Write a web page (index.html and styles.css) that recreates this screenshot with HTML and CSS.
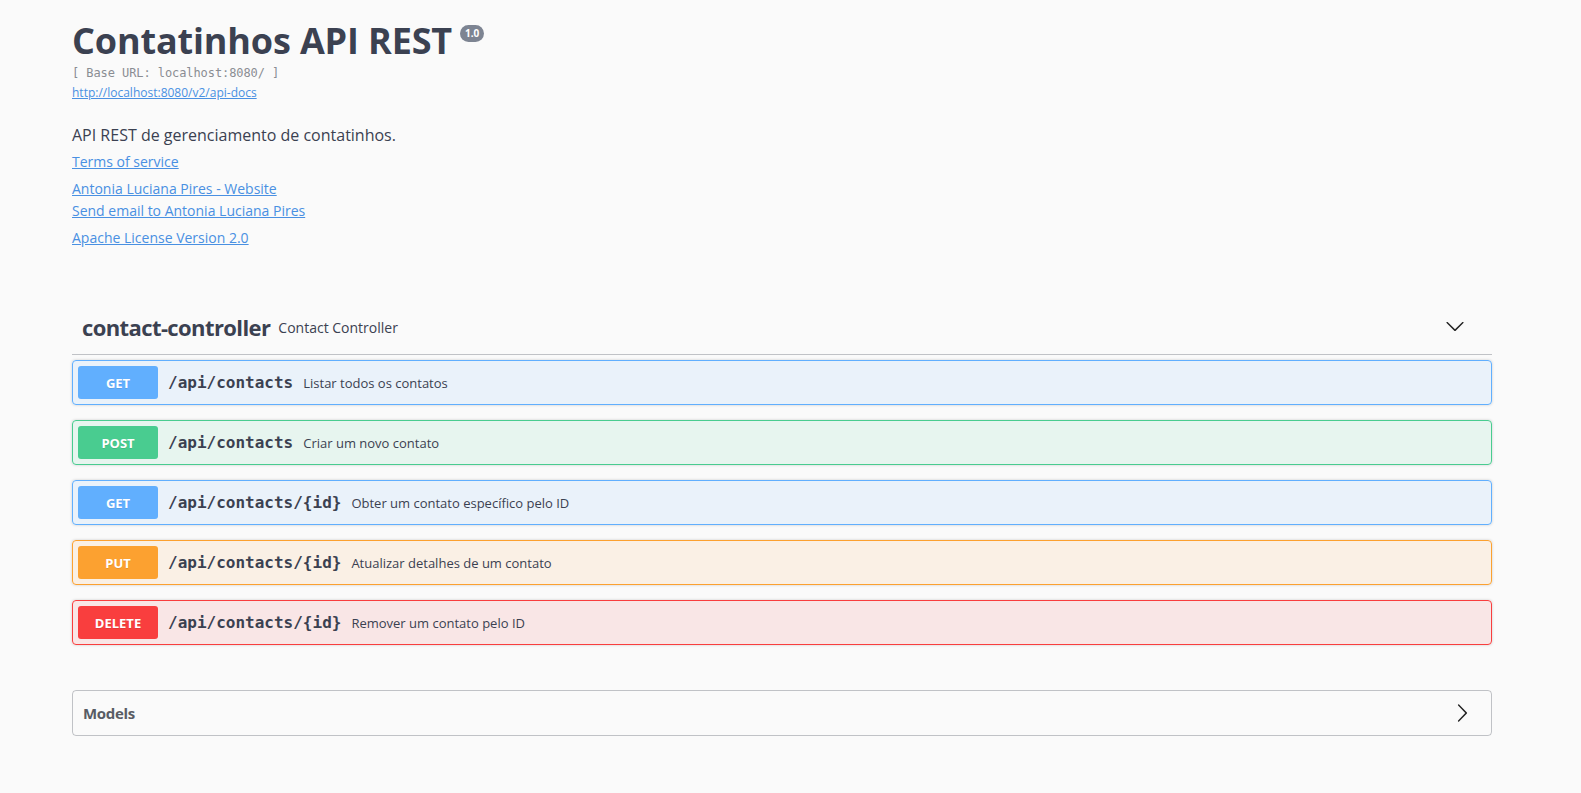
FILE: index.html
```html
<!DOCTYPE html>
<html lang="pt">
<head>
<meta charset="utf-8">
<title>Contatinhos API REST</title>
<link rel="stylesheet" href="styles.css">
</head>
<body>
<div class="wrapper">
  <section class="info">
    <div class="title-row">
      <h2 class="title">Contatinhos API REST</h2>
      <span class="version">1.0</span>
    </div>
    <div class="base-url">[ Base URL: localhost:8080/ ]</div>
    <a class="spec-link" href="#">http://localhost:8080/v2/api-docs</a>
    <p class="description">API REST de gerenciamento de contatinhos.</p>
    <a class="info-link terms" href="#">Terms of service</a>
    <a class="info-link contact" href="#">Antonia Luciana Pires - Website</a>
    <a class="info-link email" href="#">Send email to Antonia Luciana Pires</a>
    <a class="info-link license" href="#">Apache License Version 2.0</a>
  </section>

  <section class="tag-section">
    <div class="tag-header">
      <h3 class="tag-name">contact-controller</h3>
      <span class="tag-desc">Contact Controller</span>
      <svg class="tag-arrow" width="20" height="20" viewBox="0 0 20 20"><path d="M17.418 6.109c.272-.268.709-.268.979 0s.271.701 0 .969l-7.908 7.83c-.27.268-.707.268-.979 0l-7.908-7.83c-.27-.268-.27-.701 0-.969.271-.268.709-.268.979 0L10 13.250l7.418-7.141z" fill="#222"/></svg>
    </div>

    <div class="opblock get">
      <span class="method">GET</span>
      <span class="path">/api/contacts</span>
      <span class="summary">Listar todos os contatos</span>
    </div>
    <div class="opblock post">
      <span class="method">POST</span>
      <span class="path">/api/contacts</span>
      <span class="summary">Criar um novo contato</span>
    </div>
    <div class="opblock get">
      <span class="method">GET</span>
      <span class="path">/api/contacts/{id}</span>
      <span class="summary">Obter um contato específico pelo ID</span>
    </div>
    <div class="opblock put">
      <span class="method">PUT</span>
      <span class="path">/api/contacts/{id}</span>
      <span class="summary">Atualizar detalhes de um contato</span>
    </div>
    <div class="opblock delete">
      <span class="method">DELETE</span>
      <span class="path">/api/contacts/{id}</span>
      <span class="summary">Remover um contato pelo ID</span>
    </div>
  </section>

  <section class="models">
    <h4 class="models-title">Models</h4>
    <svg class="models-arrow" width="20" height="20" viewBox="0 0 20 20"><path d="M13.25 10L6.109 2.58a.697.697 0 0 1 0-.979.68.68 0 0 1 .969 0l7.830 7.908a.697.697 0 0 1 0 .979l-7.830 7.909a.68.68 0 0 1-.969 0 .697.697 0 0 1 0-.979L13.25 10z" fill="#222"/></svg>
  </section>
</div>
</body>
</html>
```

FILE: styles.css
```css
* { box-sizing: border-box; }

body {
  margin: 0;
  background: #fafafa;
  font-family: "Open Sans", "Noto Sans", sans-serif;
  color: #3b4151;
}

.wrapper {
  width: 1420px;
  margin-left: 72px;
  padding-top: 17px;
}

.info {
  display: flex;
  flex-direction: column;
  align-items: flex-start;
}

.title-row {
  display: flex;
  align-items: flex-start;
}

.title {
  margin: 0;
  font-size: 36px;
  line-height: 48px;
  font-weight: 700;
  letter-spacing: -0.15px;
  color: #3b4151;
}

.version {
  margin: 8px 0 0 8px;
  height: 17px;
  padding: 0 5px;
  border-radius: 57px;
  background: #7d8492;
  color: #fff;
  font-size: 10px;
  font-weight: 700;
  line-height: 17px;
}

.base-url {
  font-family: "DejaVu Sans Mono", monospace;
  font-size: 12px;
  line-height: 16px;
  color: #8a8d93;
  letter-spacing: -0.08px;
}

.spec-link {
  margin-top: 4px;
  font-size: 12px;
  line-height: 16px;
  color: #4990e2;
}

.description {
  margin: 24px 0 0;
  font-size: 16px;
  line-height: 20px;
  color: #3b4151;
}

.info-link {
  font-size: 14px;
  line-height: 20px;
  color: #4990e2;
}

.terms { margin-top: 7px; }
.contact { margin-top: 7px; }
.email { margin-top: 2px; }
.license { margin-top: 7px; }

.tag-section {
  margin-top: 52px;
}

.tag-header {
  display: flex;
  align-items: center;
  padding: 10px 27px 10px 10px;
  border-bottom: 1px solid rgba(59, 65, 81, 0.3);
  margin-bottom: 5px;
}

.tag-name {
  margin: 0;
  font-size: 22px;
  line-height: 34px;
  font-weight: 700;
  letter-spacing: -0.6px;
  color: #3b4151;
}

.tag-desc {
  flex: 1;
  padding: 0 8px;
  font-size: 14px;
  color: #3b4151;
}

.tag-arrow {
  margin-bottom: 3px;
}

.opblock {
  display: flex;
  align-items: center;
  height: 45px;
  padding: 5px;
  margin-bottom: 15px;
  border: 1px solid;
  border-radius: 4px;
  box-shadow: 0 0 3px rgba(0, 0, 0, 0.19);
}

.method {
  width: 80px;
  height: 33px;
  display: flex;
  align-items: center;
  justify-content: center;
  border-radius: 3px;
  color: #fff;
  font-size: 13px;
  font-weight: 700;
  text-shadow: 0 1px 0 rgba(0, 0, 0, 0.1);
}

.path {
  padding: 0 10px;
  font-family: "DejaVu Sans Mono", monospace;
  font-size: 16px;
  font-weight: 700;
  color: #3b4151;
}

.summary {
  font-size: 13px;
  color: #3b4151;
}

.get { background: rgba(97, 175, 254, 0.1); border-color: #61affe; }
.get .method { background: #61affe; }

.post { background: rgba(73, 204, 144, 0.1); border-color: #49cc90; }
.post .method { background: #49cc90; }

.put { background: rgba(252, 161, 48, 0.1); border-color: #fca130; }
.put .method { background: #fca130; }

.delete { background: rgba(249, 62, 62, 0.1); border-color: #f93e3e; }
.delete .method { background: #f93e3e; }

.models {
  margin-top: 45px;
  display: flex;
  align-items: center;
  justify-content: space-between;
  height: 46px;
  padding: 0 19px 0 10px;
  border: 1px solid rgba(59, 65, 81, 0.3);
  border-radius: 4px;
}

.models-title {
  margin: 0;
  font-size: 15px;
  font-weight: 700;
  letter-spacing: -0.3px;
  color: #585c64;
}
```
